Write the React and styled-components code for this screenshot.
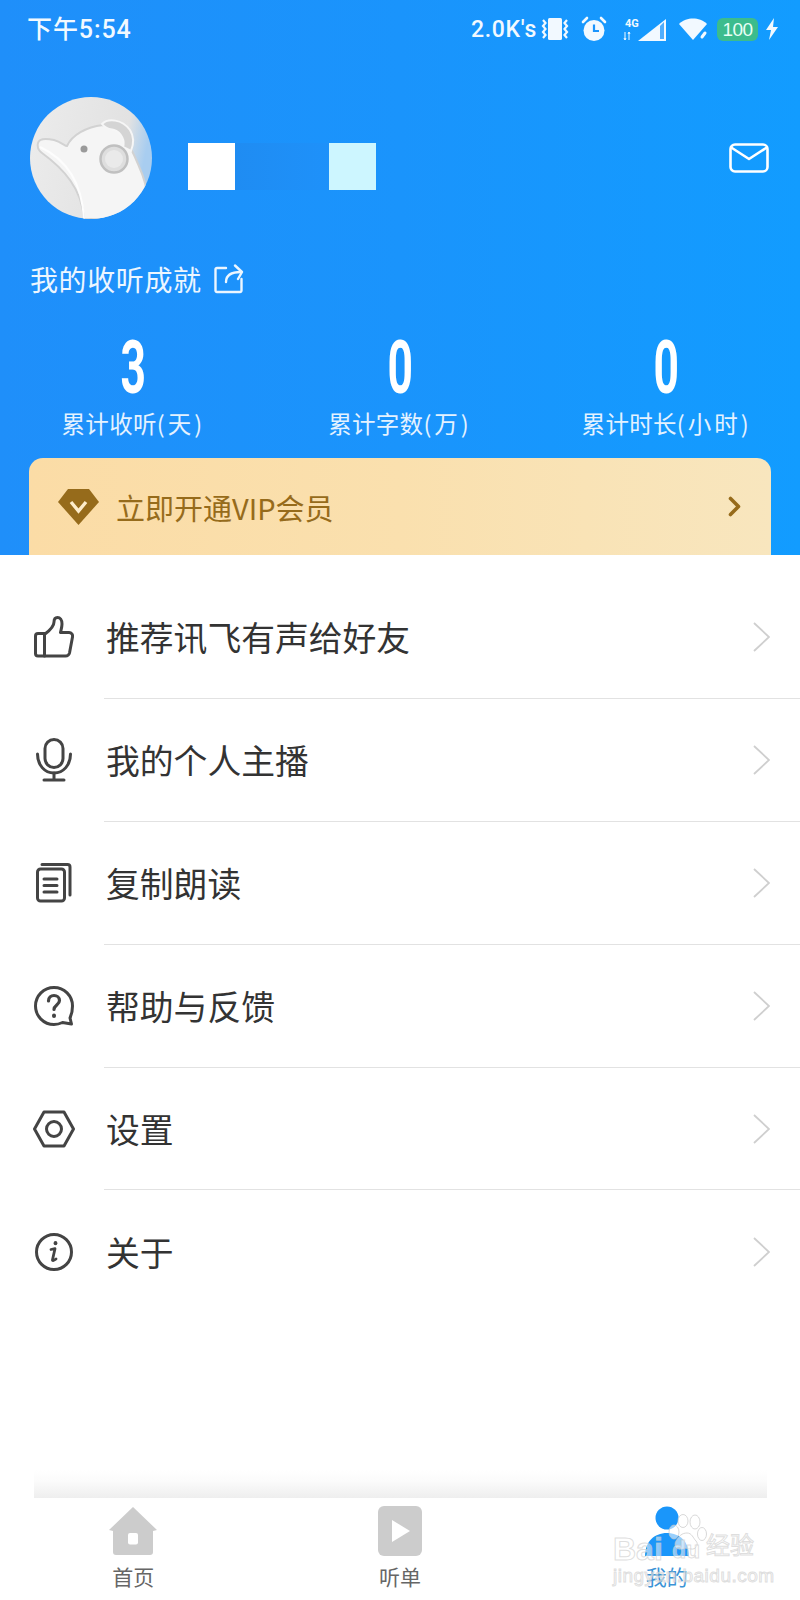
import React from 'react'
import styled, { createGlobalStyle } from 'styled-components'

const Global = createGlobalStyle`
  html, body { margin: 0; padding: 0; background: #fff; }
  * { box-sizing: border-box; }
  body { font-family: "Noto Sans CJK SC", "Noto Sans", sans-serif; }
`

const Page = styled.div`
  position: relative;
  width: 800px;
  height: 1600px;
  display: flex;
  flex-direction: column;
  overflow: hidden;
  background: #fff;
`

const Header = styled.header`
  height: 555px;
  flex: none;
  display: flex;
  flex-direction: column;
  background: linear-gradient(90deg, #1f8ffa 0%, #1a94fc 50%, #129cff 100%);
  color: #fff;
`

const StatusBar = styled.div`
  height: 58px;
  padding: 0 21px 0 27px;
  display: flex;
  align-items: center;
  justify-content: space-between;
  color: #f2f9ff;
`

const Time = styled.span`
  font: 500 25px/1 Roboto, "Noto Sans CJK SC", sans-serif;
  letter-spacing: 0.9px;
`

const StatusRight = styled.div`
  display: flex;
  align-items: center;
`

const Speed = styled.span`
  font: 500 23px/1 Roboto, sans-serif;
  letter-spacing: 0.7px;
  margin-right: 3px;
`

const Battery = styled.span`
  position: relative;
  width: 41px;
  height: 23px;
  margin: 0 7px 0 9px;
  border-radius: 6px;
  background: #3cbc8d;
  color: #e8fff5;
  font: 500 19px/23px "Liberation Sans", sans-serif;
  letter-spacing: -0.5px;
  text-align: center;
`

const Profile = styled.div`
  margin-top: 39px;
  padding: 0 31px 0 30px;
  height: 122px;
  display: flex;
  align-items: center;
`

const Name = styled.div`
  margin: 16px 0 0 36px;
  display: flex;
`

const NameBlock = styled.div`
  width: ${p => p.$w}px;
  height: 47px;
  background: ${p => p.$bg};
`

const MailWrap = styled.div`
  margin-left: auto;
  display: flex;
`

const Achieve = styled.div`
  margin-top: 43px;
  padding-left: 30px;
  height: 34px;
  display: flex;
  align-items: center;
  gap: 12px;
  font-size: 28px;
  line-height: 34px;
  letter-spacing: 0.6px;
  color: #ecf6ff;
`

const Stats = styled.div`
  margin-top: 44px;
  display: grid;
  grid-template-columns: repeat(3, 1fr);
`

const Stat = styled.div`
  display: flex;
  flex-direction: column;
  align-items: center;
`

const StatValue = styled.div`
  height: 58px;
  font: 700 74px/56px Roboto, sans-serif;
  transform: scaleX(0.6);
`

const StatLabel = styled.div`
  margin-top: 10px;
  font-size: 23.5px;
  line-height: 30px;
  letter-spacing: 0.3px;
  color: #e4f2ff;
`

const StatUnit = styled.span`
  letter-spacing: 3px;
`

const VipCard = styled.div`
  margin: auto 29px 0 29px;
  height: 97px;
  padding: 0 30px 0 29px;
  display: flex;
  align-items: center;
  border-radius: 14px 14px 0 0;
  background: linear-gradient(90deg, #fbdca6 0%, #fae0ae 50%, #f8e6be 100%);
  color: #966b1b;
`

const VipText = styled.span`
  margin-left: 17px;
  font-size: 29px;
  line-height: 36px;
  flex: 1;
`

const Menu = styled.ul`
  list-style: none;
  margin: 0;
  padding: 21px 0 0;
`

const Row = styled.li`
  height: 122.9px;
  display: flex;
  align-items: center;
  position: relative;
  padding: 0 30px 0 106px;
  &::after {
    content: '';
    display: ${p => (p.$last ? 'none' : 'block')};
    position: absolute;
    left: 104px;
    right: 0;
    bottom: 0;
    height: 1px;
    background: #e2e2e2;
  }
`

const RowIcon = styled.span`
  position: absolute;
  left: 31px;
  top: 50%;
  width: 46px;
  height: 46px;
  margin-top: -23px;
  display: flex;
  align-items: center;
  justify-content: center;
`

const RowText = styled.span`
  flex: 1;
  font-size: 33.8px;
  line-height: 44px;
  color: #333;
`

const ShadowBand = styled.div`
  margin: auto 33px 0 34px;
  height: 28px;
  flex: none;
  background: linear-gradient(180deg, #ffffff 0%, #fbfbfb 40%, #eeeeee 100%);
`

const TabBar = styled.nav`
  height: 102px;
  flex: none;
  display: grid;
  grid-template-columns: repeat(3, 1fr);
`

const Tab = styled.div`
  display: flex;
  flex-direction: column;
  align-items: center;
  padding-top: 7px;
  color: ${p => (p.$active ? '#3b93d6' : '#666')};
`

const TabIcon = styled.div`
  height: 52px;
  display: flex;
  align-items: center;
  justify-content: center;
`

const TabLabel = styled.span`
  margin-top: 6px;
  font-size: 21px;
  line-height: 26px;
`

const Watermark = styled.div`
  position: absolute;
  left: 612px;
  top: 1512px;
  width: 150px;
  height: 76px;
  pointer-events: none;
`

const MarkLine = styled.div`
  position: absolute;
  left: ${p => p.$x}px;
  top: ${p => p.$y}px;
  font: ${p => p.$weight} ${p => p.$size}px/1 "Liberation Sans", "Noto Sans CJK SC", sans-serif;
  letter-spacing: ${p => p.$ls}px;
  white-space: nowrap;
  color: rgba(255, 255, 255, 0.5);
  -webkit-text-stroke: 1px rgba(200, 200, 200, 0.6);
`

const Vibrate = () => (
  <svg width="30" height="24" viewBox="0 0 30 24">
    <rect x="8" y="1" width="14" height="22" rx="1.500" fill="#f2f9ff" />
    <path d="M3 3l2.500 3-2.500 3 2.500 3-2.500 3 2.500 3-2.500 3M27 3l-2.500 3 2.500 3-2.500 3 2.500 3-2.500 3 2.500 3" fill="none" stroke="#f2f9ff" strokeWidth="2.200" />
  </svg>
)

const Alarm = () => (
  <svg width="26" height="26" viewBox="0 0 26 26" style={{ marginLeft: 11 }}>
    <circle cx="13" cy="14.500" r="10.500" fill="#f2f9ff" />
    <path d="M13 8.500v6.500h5" fill="none" stroke="#1a94fc" strokeWidth="2.200" />
    <path d="M2 6l4-4M24 6l-4-4" stroke="#f2f9ff" strokeWidth="2.600" strokeLinecap="round" />
  </svg>
)

const Signal = () => (
  <svg width="44" height="26" viewBox="0 0 44 26" style={{ marginLeft: 16 }}>
    <text x="2" y="11" fontSize="11" fontWeight="700" fontFamily="Roboto, sans-serif" fill="#f2f9ff">4G</text>
    <path d="M2 16v8M1 22l1 2 1-2M6 24v-8M5 18l1-2 1 2" fill="none" stroke="#f2f9ff" strokeWidth="1" />
    <path d="M15 25h28V3z" fill="#f2f9ff" />
    <path d="M37 10v13h4V6z" fill="#1a94fc" opacity="0.75" />
  </svg>
)

const Wifi = () => (
  <svg width="30" height="24" viewBox="0 0 30 24" style={{ marginLeft: 11 }}>
    <path d="M1 7C5 3 10 1.500 15 1.500S25 3 29 7L15 23z" fill="#f2f9ff" />
    <path d="M24 20l3-4" stroke="#f2f9ff" strokeWidth="3" strokeLinecap="round" />
  </svg>
)

const Bolt = () => (
  <svg width="14" height="22" viewBox="0 0 14 22">
    <path d="M9 0L1 12h5l-2 10 9-13H8z" fill="#f2f9ff" />
  </svg>
)

const Avatar = () => (
  <svg width="122" height="122" viewBox="0 0 122 122" style={{ flex: 'none' }}>
    <defs>
      <clipPath id="av"><circle cx="61" cy="61" r="61" /></clipPath>
      <linearGradient id="avBg" x1="0" y1="0" x2="1" y2="0.2">
        <stop offset="0" stopColor="#ececec" />
        <stop offset="0.82" stopColor="#e2e2e2" />
        <stop offset="1" stopColor="#a8cdf0" />
      </linearGradient>
    </defs>
    <g clipPath="url(#av)">
      <rect width="122" height="122" fill="url(#avBg)" />
      <path d="M8 46C9 42 14 41 24 43C31 45 35 49 37 49C42 38 56 30 73 28C90 28 100 48 108 67C113 78 118 90 120 122H54C52 92 34 72 12 56C8 53 7 50 8 46Z" fill="#f5f5f5" stroke="#d2d2d2" strokeWidth="2" />
      <path d="M10 50C36 62 52 86 54 122" fill="none" stroke="#fdfdfd" strokeWidth="2" />
      <path d="M72 27C78 21 92 22 100 33C105 41 103 49 101 54L93 50C95 44 92 36 84 33C80 32 76 32 72 27Z" fill="#d4d4d4" stroke="#f6f6f6" strokeWidth="2" />
      <circle cx="84" cy="62" r="13.500" fill="#dedede" stroke="#c0c0c0" strokeWidth="2.500" />
      <circle cx="84" cy="62" r="9" fill="#eaeaea" />
      <circle cx="54" cy="52" r="3.500" fill="#9a9a9a" />
    </g>
  </svg>
)

const Mail = () => (
  <svg width="40" height="30" viewBox="0 0 40 30" fill="none" stroke="#fff" strokeWidth="2.600" strokeLinejoin="round" strokeLinecap="round">
    <rect x="1.500" y="1.500" width="37" height="27" rx="4.500" />
    <path d="M3 5l17 11L37 5" />
  </svg>
)

const ShareIcon = () => (
  <svg width="30" height="30" viewBox="0 0 30 30" fill="none" stroke="#ecf6ff" strokeWidth="2.400" strokeLinecap="round" strokeLinejoin="round">
    <path d="M12 4H3a1.500 1.500 0 0 0-1.500 1.500v21A1.500 1.500 0 0 0 3 28h23a1.500 1.500 0 0 0 1.500-1.500V15" />
    <path d="M12 18c0-6 4-10 15-10" />
    <path d="M21 1.500l7 6.500-4 7" />
  </svg>
)

const Diamond = () => (
  <svg width="41" height="36" viewBox="0 0 41 36" style={{ flex: 'none' }}>
    <path d="M10 0h21l10 13-20.500 23L0 13z" fill="#966b1b" />
    <path d="M13 13l7.500 9L28 13" fill="none" stroke="#fdeccb" strokeWidth="3.400" />
  </svg>
)

const VipChevron = () => (
  <svg width="13" height="21" viewBox="0 0 13 21">
    <path d="M2.500 2.500l8 8-8 8" fill="none" stroke="#966b1b" strokeWidth="3.600" strokeLinecap="round" strokeLinejoin="round" />
  </svg>
)

const Chevron = () => (
  <svg width="17" height="30" viewBox="0 0 17 30">
    <path d="M1 1l15 14L1 29" fill="none" stroke="#cfcfcf" strokeWidth="1.800" />
  </svg>
)

const stroke = { fill: 'none', stroke: '#444', strokeWidth: 3, strokeLinecap: 'round', strokeLinejoin: 'round' }

const Thumb = () => (
  <svg width="40" height="42" viewBox="0 0 40 42" {...stroke}>
    <path d="M11 18c4-3 9-7 9-12 0-3 1-4.500 3.500-4.500S28 4 28 8c0 3-1 6-1.500 8.500H35c2.500 0 4 2 3.500 4.500l-3 16c-.5 2-2 3-4 3H4c-1.500 0-2.500-1-2.500-2.500V20c0-1.500 1-2.500 2.500-2.500h7z" />
    <path d="M10.500 18v22" />
  </svg>
)

const Mic = () => (
  <svg width="36" height="44" viewBox="0 0 36 44" {...stroke}>
    <rect x="9" y="1.500" width="18" height="28" rx="9" />
    <path d="M1.500 16c0 11 7 19 16.500 19s16.500-8 16.500-19" />
    <path d="M18 35v7M8 42h20" />
  </svg>
)

const Doc = () => (
  <svg width="36" height="40" viewBox="0 0 36 40" {...stroke}>
    <rect x="1.500" y="6" width="27" height="32" rx="3" />
    <path d="M6 1.500h25.500c1.500 0 2.500 1 2.500 2.500v28" />
    <path d="M8 16h13M8 22.500h13M8 29h13" />
  </svg>
)

const Question = () => (
  <svg width="40" height="40" viewBox="0 0 40 40" {...stroke}>
    <path d="M36 32c1.500-3 2.500-7 2.500-12A18.500 18.500 0 1 0 20 38.500c3 0 6-.8 8.500-2l9 1.500z" />
    <path d="M14.500 15c0-3.500 2.500-5.500 5.500-5.500s5.500 2 5.500 5c0 4.500-5.500 4.500-5.500 9" strokeWidth="3.200" />
    <path d="M20 29.500v.5" strokeWidth="4" />
  </svg>
)

const Hexagon = () => (
  <svg width="42" height="38" viewBox="0 0 42 38" {...stroke}>
    <path d="M11 2h20l9.500 17L31 36H11L1.500 19z" />
    <circle cx="21" cy="19" r="7.500" />
  </svg>
)

const Info = () => (
  <svg width="38" height="38" viewBox="0 0 38 38" {...stroke}>
    <circle cx="19" cy="19" r="17.500" />
    <path d="M16 16.500l4-.8-2.500 11c-.2 1 .8 1.500 3.500-.7" strokeWidth="2.800" />
    <path d="M20.500 10v.3" strokeWidth="3.800" />
  </svg>
)

const HomeIcon = () => (
  <svg width="48" height="48" viewBox="0 0 48 50" preserveAspectRatio="none">
    <path d="M24 0L48 24l-4 1v22a3 3 0 0 1-3 3H7a3 3 0 0 1-3-3V25l-4-1z" fill="#cccccc" />
    <rect x="19" y="27" width="10" height="12" rx="2" fill="#fff" />
  </svg>
)

const PlayIcon = () => (
  <svg width="44" height="50" viewBox="0 0 44 50">
    <rect width="44" height="50" rx="6" fill="#cccccc" />
    <path d="M14 14l18 11-18 11z" fill="#fff" />
  </svg>
)

const PersonIcon = () => (
  <svg width="50" height="50" viewBox="0 0 50 50">
    <circle cx="25" cy="12" r="11.500" fill="#1a96fa" />
    <path d="M3 50c0-14 9-23 22-23s22 9 22 23z" fill="#1a96fa" />
  </svg>
)

const Paw = () => (
  <svg width="40" height="38" viewBox="0 0 40 38" style={{ position: 'absolute', left: 55, top: 2 }} fill="rgba(255,255,255,.55)" stroke="rgba(200,200,200,.7)" strokeWidth="1">
    <ellipse cx="7" cy="18" rx="5" ry="7" />
    <ellipse cx="16" cy="7" rx="5" ry="6.500" />
    <ellipse cx="28" cy="8" rx="5" ry="7" />
    <ellipse cx="35" cy="20" rx="4.500" ry="6.500" />
    <path d="M20 19c5 0 6 5 9 8s0 9-5 8-7-1-10 0-8-3-5-8 6-8 11-8z" />
  </svg>
)

const stats = [
  { value: '3', label: '累计收听', unit: '(天)' },
  { value: '0', label: '累计字数', unit: '(万)' },
  { value: '0', label: '累计时长', unit: '(小时)' },
]

const rows = [
  { icon: <Thumb />, text: '推荐讯飞有声给好友' },
  { icon: <Mic />, text: '我的个人主播' },
  { icon: <Doc />, text: '复制朗读' },
  { icon: <Question />, text: '帮助与反馈' },
  { icon: <Hexagon />, text: '设置' },
  { icon: <Info />, text: '关于' },
]

const tabs = [
  { icon: <HomeIcon />, label: '首页' },
  { icon: <PlayIcon />, label: '听单' },
  { icon: <PersonIcon />, label: '我的', active: true },
]

export default function App() {
  return (
    <Page>
      <Global />
      <Header>
        <StatusBar>
          <Time>下午5:54</Time>
          <StatusRight>
            <Speed>2.0K's</Speed>
            <Vibrate />
            <Alarm />
            <Signal />
            <Wifi />
            <Battery>100</Battery>
            <Bolt />
          </StatusRight>
        </StatusBar>
        <Profile>
          <Avatar />
          <Name>
            <NameBlock $w={47} $bg="#ffffff" />
            <NameBlock $w={94} $bg="linear-gradient(90deg, #1f8cf2, #1e91fa)" />
            <NameBlock $w={47} $bg="#cdf6ff" />
          </Name>
          <MailWrap><Mail /></MailWrap>
        </Profile>
        <Achieve>我的收听成就<ShareIcon /></Achieve>
        <Stats>
          {stats.map(s => (
            <Stat key={s.label}>
              <StatValue>{s.value}</StatValue>
              <StatLabel>{s.label}<StatUnit>{s.unit}</StatUnit></StatLabel>
            </Stat>
          ))}
        </Stats>
        <VipCard>
          <Diamond />
          <VipText>立即开通VIP会员</VipText>
          <VipChevron />
        </VipCard>
      </Header>
      <Menu>
        {rows.map((r, i) => (
          <Row key={r.text} $last={i === rows.length - 1}>
            <RowIcon>{r.icon}</RowIcon>
            <RowText>{r.text}</RowText>
            <Chevron />
          </Row>
        ))}
      </Menu>
      <ShadowBand />
      <TabBar>
        {tabs.map(t => (
          <Tab key={t.label} $active={t.active}>
            <TabIcon>{t.icon}</TabIcon>
            <TabLabel>{t.label}</TabLabel>
          </Tab>
        ))}
      </TabBar>
      <Watermark>
        <Paw />
        <MarkLine $x={1} $y={21} $size={32} $weight={700} $ls={0}>Bai</MarkLine>
        <MarkLine $x={60} $y={27} $size={23} $weight={700} $ls={0}>du</MarkLine>
        <MarkLine $x={94} $y={22} $size={24} $weight={400} $ls={0}>经验</MarkLine>
        <MarkLine $x={1} $y={54} $size={19} $weight={400} $ls={0.5}>jingyan.baidu.com</MarkLine>
      </Watermark>
    </Page>
  )
}
